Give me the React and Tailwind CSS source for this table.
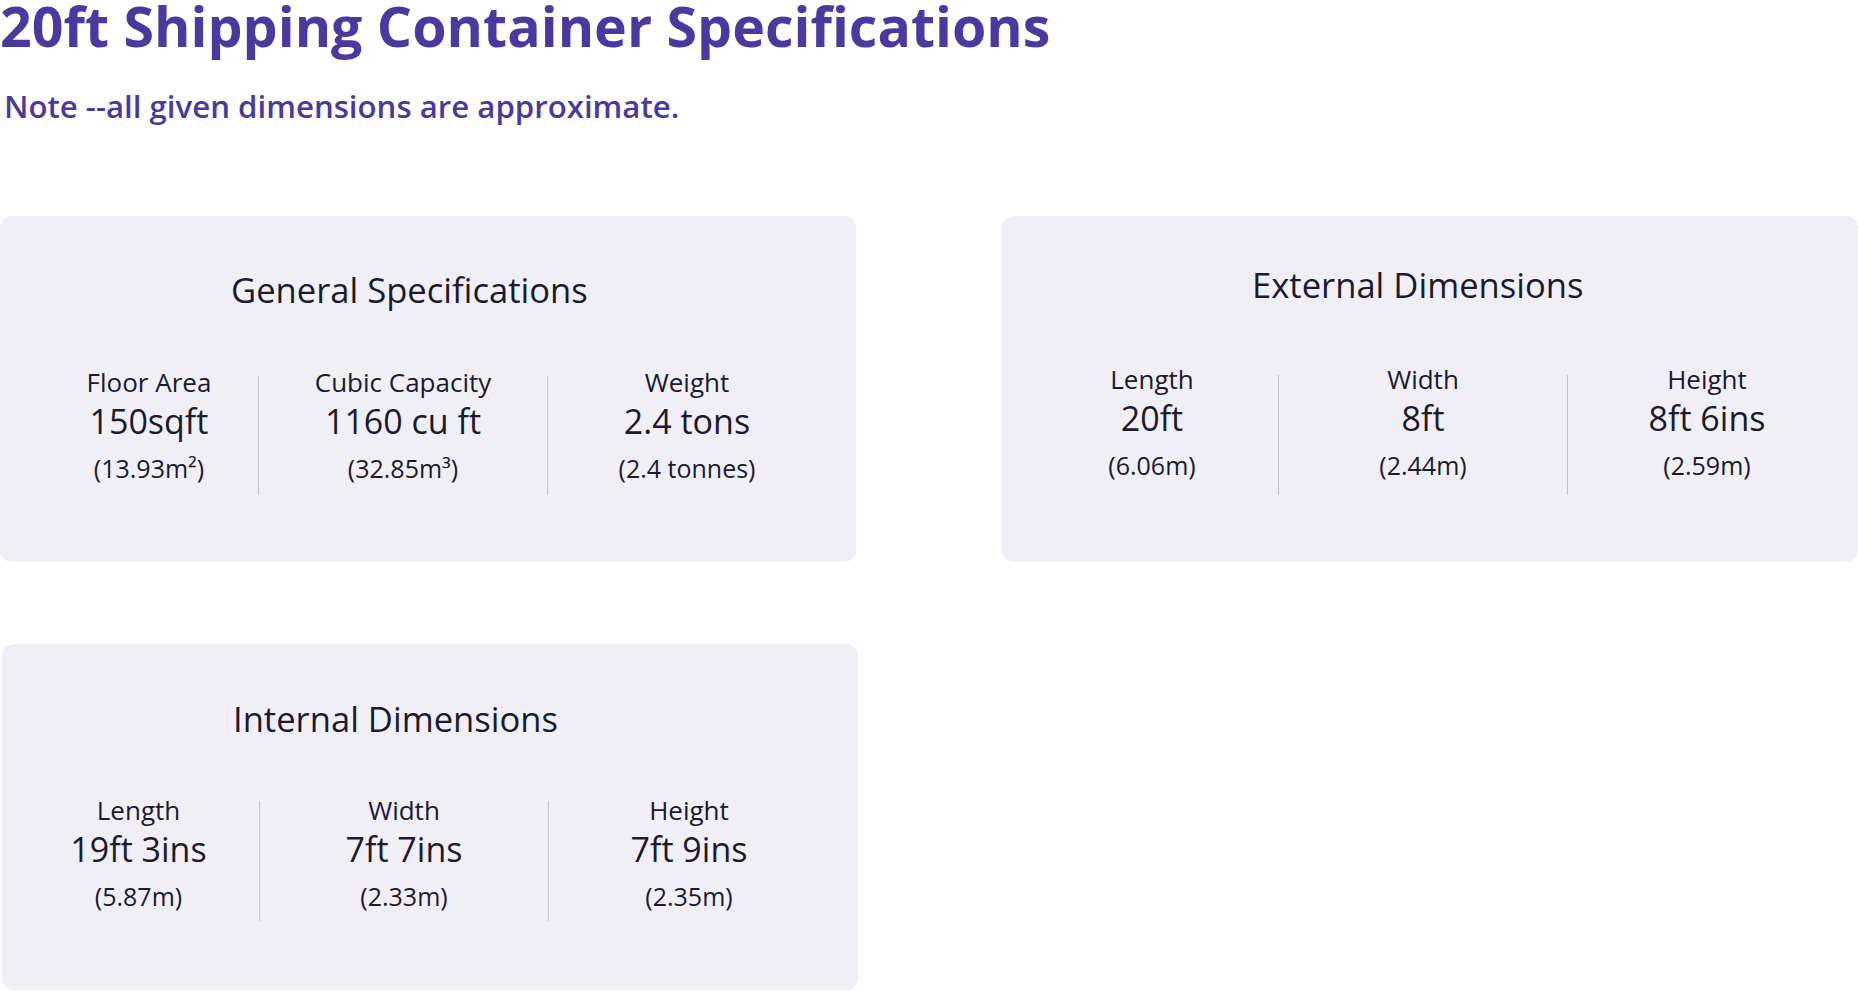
import React from "react";

const cards = [
  {
    key: "general",
    title: "General Specifications",
    top: "pt-[54px]",
    titlePad: "pl-[231px]",
    row: "mt-[57px] pl-[40px]",
    divider: "mt-[9px] h-[119px]",
    widths: ["w-[218px]", "w-[288px]", "w-[278px]"],
    stats: [
      { label: "Floor Area", value: "150sqft", sub: "(13.93m²)" },
      { label: "Cubic Capacity", value: "1160 cu ft", sub: "(32.85m³)" },
      { label: "Weight", value: "2.4 tons", sub: "(2.4 tonnes)" },
    ],
  },
  {
    key: "external",
    title: "External Dimensions",
    top: "pt-[49px]",
    titlePad: "pl-[250px]",
    row: "mt-[59px] pl-[24px]",
    divider: "mt-[11px] h-[120px]",
    widths: ["w-[252px]", "w-[288px]", "w-[278px]"],
    stats: [
      { label: "Length", value: "20ft", sub: "(6.06m)" },
      { label: "Width", value: "8ft", sub: "(2.44m)" },
      { label: "Height", value: "8ft 6ins", sub: "(2.59m)" },
    ],
  },
  {
    key: "internal",
    title: "Internal Dimensions",
    top: "pt-[55px]",
    titlePad: "pl-[231px]",
    row: "mt-[56px] pl-[16px]",
    divider: "mt-[6px] h-[120px]",
    widths: ["w-[241px]", "w-[288px]", "w-[280px]"],
    stats: [
      { label: "Length", value: "19ft 3ins", sub: "(5.87m)" },
      { label: "Width", value: "7ft 7ins", sub: "(2.33m)" },
      { label: "Height", value: "7ft 9ins", sub: "(2.35m)" },
    ],
  },
];

const SpecCard = ({ card, className = "" }) => (
  <div className={`h-[346px] w-[856px] rounded-xl bg-[#f0eff5] text-[#1b1a2e] ${card.top} ${className}`}>
    <h2 className={`text-[34.6px] leading-[40px] font-normal ${card.titlePad}`}>{card.title}</h2>
    <div className={`flex items-start ${card.row}`}>
      {card.stats.map((s, i) => (
        <React.Fragment key={s.label}>
          {i > 0 && <div className={`w-px shrink-0 bg-[#c4c3ca] ${card.divider}`} />}
          <div className={`flex shrink-0 flex-col items-center text-center ${card.widths[i]}`}>
            <span className="text-[26px] leading-[30px]">{s.label}</span>
            <span className="text-[34px] leading-[48px]">{s.value}</span>
            <span className="text-[25px] leading-[47px]">{s.sub}</span>
          </div>
        </React.Fragment>
      ))}
    </div>
  </div>
);

const App = () => {
  return (
    <div className="h-[991px] w-[1858px] overflow-hidden bg-white font-['Open_Sans',sans-serif]">
      <h1 className="text-[55.5px] leading-[52px] font-bold text-[#4a3aa0]">
        20ft Shipping Container Specifications
      </h1>
      <p className="mt-[34px] pl-[4px] text-[31.2px] leading-[40px] font-semibold text-[#4a3aa0]">
        Note --all given dimensions are approximate.
      </p>

      {/* spec cards */}
      <div className="mt-[90px] grid grid-cols-[856px_856px] gap-x-[146px] gap-y-[83px]">
        <SpecCard card={cards[0]} />
        <SpecCard card={cards[1]} />
        <SpecCard card={cards[2]} className="ml-[2px] -mt-[1px]" />
      </div>
    </div>
  );
};

export default App;
